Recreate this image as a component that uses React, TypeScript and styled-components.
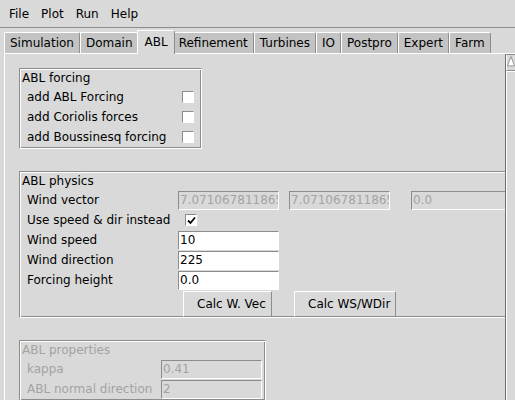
import React from "react";
import styled, { createGlobalStyle } from "styled-components";

const Global = createGlobalStyle`
  html, body { margin: 0; padding: 0; background: #d9d9d9; }
  body { font-family: "DejaVu Sans", "Liberation Sans", sans-serif; font-size: 12px; color: #000; overflow: hidden; }
`;

const DARK = "#8c8c8c";
const LIGHT = "#ffffff";
const BG = "#d9d9d9";
const DIS = "#a3a3a3";

const Page = styled.div`
  width: 515px;
  height: 400px;
  overflow: hidden;
  display: flex;
  flex-direction: column;
  background: ${BG};
`;

const MenuBar = styled.div`
  display: flex;
  align-items: center;
  height: 28px;
  padding: 1px 0 0 3px;
  box-sizing: border-box;
  border-bottom: 1px solid ${DARK};
  flex-shrink: 0;
`;

const MenuItem = styled.span`
  padding: 0 6px;
  line-height: 14px;
`;

const TabRow = styled.div`
  display: flex;
  align-items: flex-end;
  height: 25px;
  padding-left: 4px;
  flex-shrink: 0;
`;

const Tab = styled.div<{ $active?: boolean }>`
  position: relative;
  z-index: ${(p) => (p.$active ? 1 : 0)};
  box-sizing: border-box;
  display: flex;
  align-items: center;
  height: ${(p) => (p.$active ? 24 : 21)}px;
  margin: 0 ${(p) => (p.$active ? -2 : 0)}px ${(p) => (p.$active ? -1 : 0)}px;
  padding: ${(p) => (p.$active ? "0 6px 1px 7px" : "0 5px")};
  background: ${(p) => (p.$active ? BG : "#c3c3c3")};
  border-top: 1px solid ${LIGHT};
  border-left: 1px solid ${LIGHT};
  border-right: 1px solid ${DARK};
  border-top-right-radius: 3px;
  border-top-left-radius: 1px;
  line-height: 14px;
  white-space: nowrap;
`;

const Panel = styled.div`
  flex: 1;
  min-height: 0;
  display: flex;
  margin-left: 4px;
  border-top: 1px solid ${LIGHT};
  border-left: 1px solid ${LIGHT};
`;

const Canvas = styled.div`
  flex: 1;
  min-width: 0;
  overflow: hidden;
  padding: 14px 0 0 14px;
  display: flex;
  flex-direction: column;
  align-items: flex-start;
`;

const Scrollbar = styled.div`
  width: 10px;
  flex-shrink: 0;
  display: flex;
  flex-direction: column;
  border-left: 1px solid #6e6e6e;
  border-top: 1px solid ${DARK};
  box-sizing: border-box;
`;

const ArrowButton = styled.div`
  height: 15px;
  flex-shrink: 0;
  display: flex;
  align-items: flex-start;
  border-left: 1px solid ${LIGHT};
  border-bottom: 1px solid ${DARK};
`;

const Slider = styled.div`
  flex: 1;
  border-left: 1px solid ${LIGHT};
  border-top: 1px solid ${LIGHT};
`;

const Group = styled.div<{ $width?: number }>`
  flex-shrink: 0;
  width: ${(p) => (p.$width ? `${p.$width}px` : "auto")};
  box-sizing: border-box;
  padding: 0 2px;
  border: 1px solid;
  border-color: ${DARK} ${LIGHT} ${LIGHT} ${DARK};
  box-shadow: inset 1px 1px 0 ${LIGHT}, inset -1px -1px 0 ${DARK};
  margin-bottom: 22px;
`;

const GroupTitle = styled.div<{ $disabled?: boolean }>`
  height: 17px;
  line-height: 17px;
  margin-top: 1px;
  color: ${(p) => (p.$disabled ? DIS : "#000")};
  white-space: nowrap;
`;

const Grid = styled.div<{ $cols: string; $row?: number; $pb?: number }>`
  display: grid;
  grid-template-columns: ${(p) => p.$cols};
  grid-auto-rows: ${(p) => p.$row ?? 20}px;
  align-items: center;
  padding-bottom: ${(p) => p.$pb ?? 1}px;
`;

const Label = styled.span<{ $disabled?: boolean }>`
  padding-left: 5px;
  line-height: 14px;
  white-space: nowrap;
  color: ${(p) => (p.$disabled ? DIS : "#000")};
`;

const Entry = styled.div<{ $disabled?: boolean; $ml?: number }>`
  box-sizing: border-box;
  width: 101px;
  height: 19px;
  align-self: start;
  margin-top: 1px;
  margin-left: ${(p) => p.$ml ?? 0}px;
  padding-left: 1px;
  border: 1px solid;
  border-color: ${DARK} ${LIGHT} ${LIGHT} ${DARK};
  background: ${(p) => (p.$disabled ? BG : "#ffffff")};
  color: ${(p) => (p.$disabled ? DIS : "#000")};
  line-height: 17px;
  white-space: nowrap;
  overflow: hidden;
`;

const Check = styled.span<{ $ml?: number }>`
  box-sizing: border-box;
  display: flex;
  align-items: center;
  justify-content: center;
  width: 12px;
  height: 12px;
  margin-left: ${(p) => p.$ml ?? 0}px;
  background: #fff;
  border: 1px solid;
  border-color: ${DARK} ${LIGHT} ${LIGHT} ${DARK};
`;

const Button = styled.button<{ $ml?: number }>`
  justify-self: start;
  align-self: start;
  margin: 1px 0 0 ${(p) => p.$ml ?? 0}px;
  height: 26px;
  padding: 0 5px 0 13px;
  font: inherit;
  color: #000;
  background: ${BG};
  border: 1px solid;
  border-color: ${LIGHT} ${DARK} ${DARK} ${LIGHT};
  border-radius: 0;
  white-space: nowrap;
`;

const tabs = ["Simulation", "Domain", "ABL", "Refinement", "Turbines", "IO", "Postpro", "Expert", "Farm"];
const WV = "7.0710678118654755";

export default function App() {
  return (
    <Page>
      <Global />
      <MenuBar>
        {["File", "Plot", "Run", "Help"].map((m) => (
          <MenuItem key={m}>{m}</MenuItem>
        ))}
      </MenuBar>
      <TabRow>
        {tabs.map((t) => (
          <Tab key={t} $active={t === "ABL"}>
            {t}
          </Tab>
        ))}
      </TabRow>
      <Panel>
        <Canvas>
          <Group $width={183}>
            <GroupTitle>ABL forcing</GroupTitle>
            <Grid $cols="158px 17px">
              <Label>add ABL Forcing</Label>
              <Check $ml={2} />
              <Label>add Coriolis forces</Label>
              <Check $ml={2} />
              <Label>add Boussinesq forcing</Label>
              <Check $ml={2} />
            </Grid>
          </Group>

          <Group>
            <GroupTitle>ABL physics</GroupTitle>
            <Grid $cols="156px 111px 122px 110px" $pb={0}>
              <Label>Wind vector</Label>
              <Entry $disabled>{WV}</Entry>
              <Entry $disabled>{WV}</Entry>
              <Entry $disabled>0.0</Entry>

              <Label>Use speed &amp; dir instead</Label>
              <Check $ml={7}>
                <svg width="9" height="9" viewBox="0 0 9 9">
                  <path d="M1 4.5 L3.5 7 L8 1.5" fill="none" stroke="#000" strokeWidth="1.8" />
                </svg>
              </Check>
              <span />
              <span />

              <Label>Wind speed</Label>
              <Entry>10</Entry>
              <span />
              <span />

              <Label>Wind direction</Label>
              <Entry>225</Entry>
              <span />
              <span />

              <Label>Forcing height</Label>
              <Entry>0.0</Entry>
              <span />
              <span />
            </Grid>
            <Grid $cols="156px 111px 122px 110px" $row={27} $pb={0}>
              <span />
              <Button $ml={5}>Calc W. Vec</Button>
              <Button $ml={5}>Calc WS/WDir</Button>
            </Grid>
          </Group>

          <Group $width={247}>
            <GroupTitle $disabled>ABL properties</GroupTitle>
            <Grid $cols="139px 100px">
              <Label $disabled>kappa</Label>
              <Entry $disabled>0.41</Entry>
              <Label $disabled>ABL normal direction</Label>
              <Entry $disabled>2</Entry>
            </Grid>
          </Group>
        </Canvas>
        <Scrollbar>
          <ArrowButton>
            <svg width="9" height="12" viewBox="0 0 9 12">
              <path d="M0.5 11.5 L4.5 1 L8.5 11.5 Z" fill="#fff" stroke="#8c8c8c" strokeWidth="1" />
            </svg>
          </ArrowButton>
          <Slider />
        </Scrollbar>
      </Panel>
    </Page>
  );
}
